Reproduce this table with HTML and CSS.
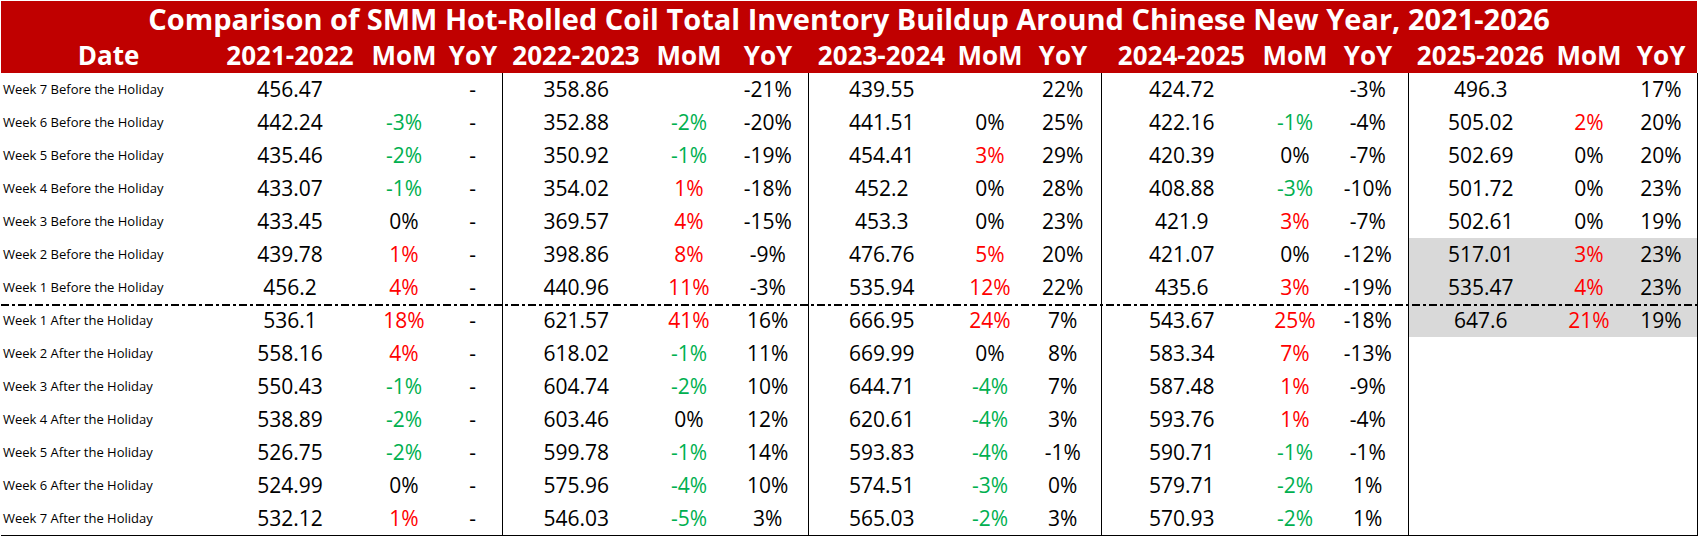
FILE: index.html
```html
<!DOCTYPE html>
<html lang="en">
<head>
<meta charset="utf-8">
<title>SMM Hot-Rolled Coil Inventory</title>
<link rel="stylesheet" href="styles.css">
</head>
<body>
<div class="wrap">
<table class="inv">
<colgroup>
<col class="c-date">
<col class="c-v1"><col class="c-m1"><col class="c-y1">
<col class="c-v2"><col class="c-m2"><col class="c-y2">
<col class="c-v3"><col class="c-m3"><col class="c-y3">
<col class="c-v4"><col class="c-m4"><col class="c-y4">
<col class="c-v5"><col class="c-m5"><col class="c-y5">
</colgroup>
<thead>
<tr class="title-row"><th colspan="16">Comparison of SMM Hot-Rolled Coil Total Inventory Buildup Around Chinese New Year, 2021-2026</th></tr>
<tr class="head-row">
<th>Date</th>
<th>2021-2022</th><th>MoM</th><th>YoY</th>
<th>2022-2023</th><th>MoM</th><th>YoY</th>
<th>2023-2024</th><th>MoM</th><th>YoY</th>
<th>2024-2025</th><th>MoM</th><th>YoY</th>
<th>2025-2026</th><th>MoM</th><th>YoY</th>
</tr>
</thead>
<tbody>
<tr>
<td class="lbl">Week 7 Before the Holiday</td>
<td>456.47</td><td></td><td>-</td>
<td class="gs">358.86</td><td></td><td>-21%</td>
<td class="gs">439.55</td><td></td><td>22%</td>
<td class="gs">424.72</td><td></td><td>-3%</td>
<td class="gs">496.3</td><td></td><td class="end">17%</td>
</tr>
<tr>
<td class="lbl">Week 6 Before the Holiday</td>
<td>442.24</td><td class="g">-3%</td><td>-</td>
<td class="gs">352.88</td><td class="g">-2%</td><td>-20%</td>
<td class="gs">441.51</td><td>0%</td><td>25%</td>
<td class="gs">422.16</td><td class="g">-1%</td><td>-4%</td>
<td class="gs">505.02</td><td class="r">2%</td><td class="end">20%</td>
</tr>
<tr>
<td class="lbl">Week 5 Before the Holiday</td>
<td>435.46</td><td class="g">-2%</td><td>-</td>
<td class="gs">350.92</td><td class="g">-1%</td><td>-19%</td>
<td class="gs">454.41</td><td class="r">3%</td><td>29%</td>
<td class="gs">420.39</td><td>0%</td><td>-7%</td>
<td class="gs">502.69</td><td>0%</td><td class="end">20%</td>
</tr>
<tr>
<td class="lbl">Week 4 Before the Holiday</td>
<td>433.07</td><td class="g">-1%</td><td>-</td>
<td class="gs">354.02</td><td class="r">1%</td><td>-18%</td>
<td class="gs">452.2</td><td>0%</td><td>28%</td>
<td class="gs">408.88</td><td class="g">-3%</td><td>-10%</td>
<td class="gs">501.72</td><td>0%</td><td class="end">23%</td>
</tr>
<tr>
<td class="lbl">Week 3 Before the Holiday</td>
<td>433.45</td><td>0%</td><td>-</td>
<td class="gs">369.57</td><td class="r">4%</td><td>-15%</td>
<td class="gs">453.3</td><td>0%</td><td>23%</td>
<td class="gs">421.9</td><td class="r">3%</td><td>-7%</td>
<td class="gs">502.61</td><td>0%</td><td class="end">19%</td>
</tr>
<tr>
<td class="lbl">Week 2 Before the Holiday</td>
<td>439.78</td><td class="r">1%</td><td>-</td>
<td class="gs">398.86</td><td class="r">8%</td><td>-9%</td>
<td class="gs">476.76</td><td class="r">5%</td><td>20%</td>
<td class="gs">421.07</td><td>0%</td><td>-12%</td>
<td class="gs hl">517.01</td><td class="hl r">3%</td><td class="hl end">23%</td>
</tr>
<tr>
<td class="lbl">Week 1 Before the Holiday</td>
<td>456.2</td><td class="r">4%</td><td>-</td>
<td class="gs">440.96</td><td class="r">11%</td><td>-3%</td>
<td class="gs">535.94</td><td class="r">12%</td><td>22%</td>
<td class="gs">435.6</td><td class="r">3%</td><td>-19%</td>
<td class="gs hl">535.47</td><td class="hl r">4%</td><td class="hl end">23%</td>
</tr>
<tr class="after-first">
<td class="lbl">Week 1 After the Holiday</td>
<td>536.1</td><td class="r">18%</td><td>-</td>
<td class="gs">621.57</td><td class="r">41%</td><td>16%</td>
<td class="gs">666.95</td><td class="r">24%</td><td>7%</td>
<td class="gs">543.67</td><td class="r">25%</td><td>-18%</td>
<td class="gs hl">647.6</td><td class="hl r">21%</td><td class="hl end">19%</td>
</tr>
<tr>
<td class="lbl">Week 2 After the Holiday</td>
<td>558.16</td><td class="r">4%</td><td>-</td>
<td class="gs">618.02</td><td class="g">-1%</td><td>11%</td>
<td class="gs">669.99</td><td>0%</td><td>8%</td>
<td class="gs">583.34</td><td class="r">7%</td><td>-13%</td>
<td class="gs"></td><td></td><td class="end"></td>
</tr>
<tr>
<td class="lbl">Week 3 After the Holiday</td>
<td>550.43</td><td class="g">-1%</td><td>-</td>
<td class="gs">604.74</td><td class="g">-2%</td><td>10%</td>
<td class="gs">644.71</td><td class="g">-4%</td><td>7%</td>
<td class="gs">587.48</td><td class="r">1%</td><td>-9%</td>
<td class="gs"></td><td></td><td class="end"></td>
</tr>
<tr>
<td class="lbl">Week 4 After the Holiday</td>
<td>538.89</td><td class="g">-2%</td><td>-</td>
<td class="gs">603.46</td><td>0%</td><td>12%</td>
<td class="gs">620.61</td><td class="g">-4%</td><td>3%</td>
<td class="gs">593.76</td><td class="r">1%</td><td>-4%</td>
<td class="gs"></td><td></td><td class="end"></td>
</tr>
<tr>
<td class="lbl">Week 5 After the Holiday</td>
<td>526.75</td><td class="g">-2%</td><td>-</td>
<td class="gs">599.78</td><td class="g">-1%</td><td>14%</td>
<td class="gs">593.83</td><td class="g">-4%</td><td>-1%</td>
<td class="gs">590.71</td><td class="g">-1%</td><td>-1%</td>
<td class="gs"></td><td></td><td class="end"></td>
</tr>
<tr>
<td class="lbl">Week 6 After the Holiday</td>
<td>524.99</td><td>0%</td><td>-</td>
<td class="gs">575.96</td><td class="g">-4%</td><td>10%</td>
<td class="gs">574.51</td><td class="g">-3%</td><td>0%</td>
<td class="gs">579.71</td><td class="g">-2%</td><td>1%</td>
<td class="gs"></td><td></td><td class="end"></td>
</tr>
<tr class="last">
<td class="lbl">Week 7 After the Holiday</td>
<td>532.12</td><td class="r">1%</td><td>-</td>
<td class="gs">546.03</td><td class="g">-5%</td><td>3%</td>
<td class="gs">565.03</td><td class="g">-2%</td><td>3%</td>
<td class="gs">570.93</td><td class="g">-2%</td><td>1%</td>
<td class="gs"></td><td></td><td class="end"></td>
</tr>
</tbody>
</table>
</div>
</body>
</html>
```
FILE: styles.css
```css
html, body {
  margin: 0;
  padding: 0;
  background: #ffffff;
}

.wrap {
  padding: 1px 0 0 1px;
}

.inv {
  table-layout: fixed;
  width: 1696px;
  border-collapse: collapse;
  font-family: "Open Sans", "Noto Sans", sans-serif;
  color: #000;
}

.c-date { width: 215px; }
.c-v1 { width: 148px; } .c-m1 { width: 80px; } .c-y1 { width: 58px; }
.c-v2 { width: 148px; } .c-m2 { width: 78px; } .c-y2 { width: 80px; }
.c-v3 { width: 147px; } .c-m3 { width: 70px; } .c-y3 { width: 76px; }
.c-v4 { width: 161px; } .c-m4 { width: 66px; } .c-y4 { width: 80px; }
.c-v5 { width: 145px; } .c-m5 { width: 72px; } .c-y5 { width: 72px; }

.inv th,
.inv td {
  padding: 0;
  white-space: nowrap;
  text-align: center;
  vertical-align: middle;
  overflow: visible;
}

.inv thead th {
  background: #c00000;
  color: #ffffff;
  font-weight: 700;
}

.title-row th {
  height: 36px;
  font-size: 29px;
  line-height: 36px;
}

.head-row th {
  height: 36px;
  font-size: 26px;
  line-height: 36px;
}

.inv tbody tr {
  height: 33px;
}

.inv tbody td {
  font-size: 21px;
  line-height: 33px;
  height: 33px;
}

.inv tbody td.lbl {
  text-align: left;
  padding-left: 2px;
  font-size: 13px;
}

.inv td.gs {
  border-left: 1px solid #000;
}

.inv td.end {
  border-right: 1px solid #000;
}

.inv tr.last td {
  border-bottom: 1px solid #000;
}

.inv td.g { color: #00b050; }
.inv td.r { color: #ff0000; }
.inv td.hl { background-color: #d9d9d9; }

.inv tr.after-first td {
  background-image: repeating-linear-gradient(90deg,
    #000 0 8px, transparent 8px 11px, #000 11px 14px, transparent 14px 17px);
  background-attachment: fixed;
  background-size: 100% 2px;
  background-position: 1px 304px;
  background-repeat: no-repeat;
}
```
